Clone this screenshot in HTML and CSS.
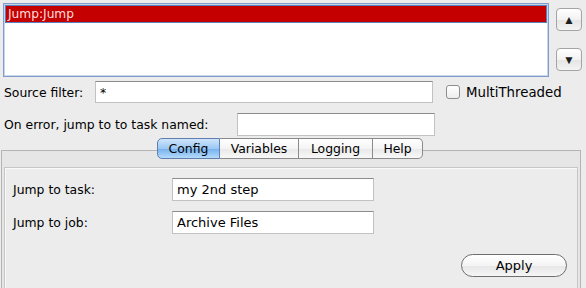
FILE: index.html
```html
<!DOCTYPE html>
<html lang="en">
<head>
    <meta charset="UTF-8">
    <title>Jump Task</title>
    <link rel="stylesheet" href="styles.css">
</head>
<body>
    <div class="list-row">
        <div class="task-list">
            <div class="task-item selected">Jump:Jump</div>
        </div>
        <div class="move-buttons">
            <button class="arrow-button">&#9650;</button>
            <button class="arrow-button">&#9660;</button>
        </div>
    </div>

    <div class="form-row filter-row">
        <label class="label filter-label">Source filter:</label>
        <input class="text-field filter-field" type="text" value="*">
        <label class="check"><span class="check-box"></span>MultiThreaded</label>
    </div>

    <div class="form-row error-row">
        <label class="label error-label">On error, jump to to task named:</label>
        <input class="text-field error-field" type="text" value="">
    </div>

    <div class="tabs">
        <span class="tab active tab-config">Config</span>
        <span class="tab tab-variables">Variables</span>
        <span class="tab tab-logging">Logging</span>
        <span class="tab last tab-help">Help</span>
    </div>
    <div class="panel">
        <div class="panel-body">
            <div class="form-row config-row">
                <label class="label config-label">Jump to task:</label>
                <input class="text-field config-field" type="text" value="my 2nd step">
            </div>
            <div class="form-row config-row">
                <label class="label config-label">Jump to job:</label>
                <input class="text-field config-field" type="text" value="Archive Files">
            </div>
            <div class="apply-row">
                <button class="apply-button">Apply</button>
            </div>
        </div>
    </div>
</body>
</html>
```

FILE: styles.css
```css
body {
    margin: 0;
    background-color: #ececec;
    font-family: "DejaVu Sans", sans-serif;
    font-size: 12.4px;
    color: #000;
    overflow: hidden;
}
.list-row {
    display: flex;
    padding: 3px 0 0 3px;
}
.task-list {
    width: 544px;
    height: 72px;
    background-color: #fff;
    border: 1px solid #7f9dcb;
    box-shadow: inset 0 0 0 1px #c9d6ea;
}
.task-item {
    height: 16px;
    line-height: 16px;
    margin: 1px 1px 0 1px;
    padding-left: 2px;
    font-size: 12.2px;
}
.task-item.selected {
    background-color: #c40000;
    color: #ffdede;
    border: 1px solid #5a7fc0;
}
.move-buttons {
    display: flex;
    flex-direction: column;
    gap: 17px;
    margin: 5px 0 0 7px;
}
.arrow-button {
    width: 26px;
    height: 23px;
    padding: 0;
    border: 1px solid #a4a4a4;
    border-radius: 4px;
    background: linear-gradient(#ffffff, #f2f2f2 50%, #e4e4e4 51%, #f4f4f4);
    font-size: 12px;
    color: #1e1e1e;
    line-height: 20px;
}
.form-row {
    display: flex;
    align-items: center;
}
.label {
    font-size: 12.4px;
}
.text-field {
    box-sizing: border-box;
    height: 22px;
    padding: 0 4px;
    border: 1px solid #c2c2c2;
    border-top-color: #8c8c8c;
    background-color: #fff;
    font-family: "DejaVu Sans", sans-serif;
    font-size: 12.4px;
    outline: none;
}
.filter-row {
    margin-top: 4px;
    padding-left: 4px;
}
.filter-label {
    width: 91px;
}
.filter-field {
    width: 338px;
}
.check {
    display: flex;
    align-items: center;
    margin-left: 13px;
    font-size: 13.3px;
}
.check-box {
    width: 12px;
    height: 12px;
    margin-right: 6px;
    border: 1px solid #8e8e8e;
    border-radius: 3px;
    background: linear-gradient(#ffffff, #ededed);
}
.error-row {
    margin-top: 10px;
    padding-left: 4px;
}
.error-label {
    width: 233px;
}
.error-field {
    width: 198px;
    height: 23px;
}
.tabs {
    display: flex;
    justify-content: center;
    margin: 2px 6px -9px 0;
    position: relative;
}
.tab {
    box-sizing: border-box;
    height: 21px;
    line-height: 19px;
    text-align: center;
    border: 1px solid #8a8a8a;
    border-left: none;
    background: linear-gradient(#ffffff, #f4f4f4 50%, #e8e8e8 51%, #f8f8f8);
    font-size: 12.4px;
}
.tab-config {
    width: 63px;
}
.tab-variables {
    width: 79px;
}
.tab-logging {
    width: 74px;
}
.tab-help {
    width: 50px;
}
.tab.active {
    border-left: 1px solid #5f7fae;
    border-color: #5f7fae;
    border-radius: 5px 0 0 5px;
    background: linear-gradient(#cfe5fb, #9bc8f4 50%, #74b0ef 51%, #b5dafb);
}
.tab.last {
    border-radius: 0 5px 5px 0;
}
.panel {
    margin: 0 5px 0 1px;
    padding-top: 16px;
    border: 1px solid #b4b4b4;
    border-bottom: none;
    background-color: #e6e6e6;
    height: 121px;
}
.panel-body {
    box-sizing: border-box;
    height: 121px;
    margin: 0 2px 0 2px;
    padding: 10px 8px 0 8px;
    border: 1px solid #c6c6c6;
    border-bottom: none;
    box-shadow: inset 1px 1px 0 #fafafa;
    background-color: #ececec;
}
.config-row {
    margin-bottom: 10px;
}
.config-label {
    width: 159px;
}
.config-field {
    width: 202px;
    height: 23px;
    font-size: 13px;
}
.apply-row {
    display: flex;
    justify-content: flex-end;
    margin-top: 20px;
    padding-right: 2px;
}
.apply-button {
    width: 106px;
    height: 23px;
    border: 1px solid #6e6e6e;
    border-radius: 12px;
    background: linear-gradient(#ffffff, #f4f4f4 50%, #e6e6e6 51%, #f6f6f6);
    font-family: "DejaVu Sans", sans-serif;
    font-size: 13px;
    color: #000;
}
```
